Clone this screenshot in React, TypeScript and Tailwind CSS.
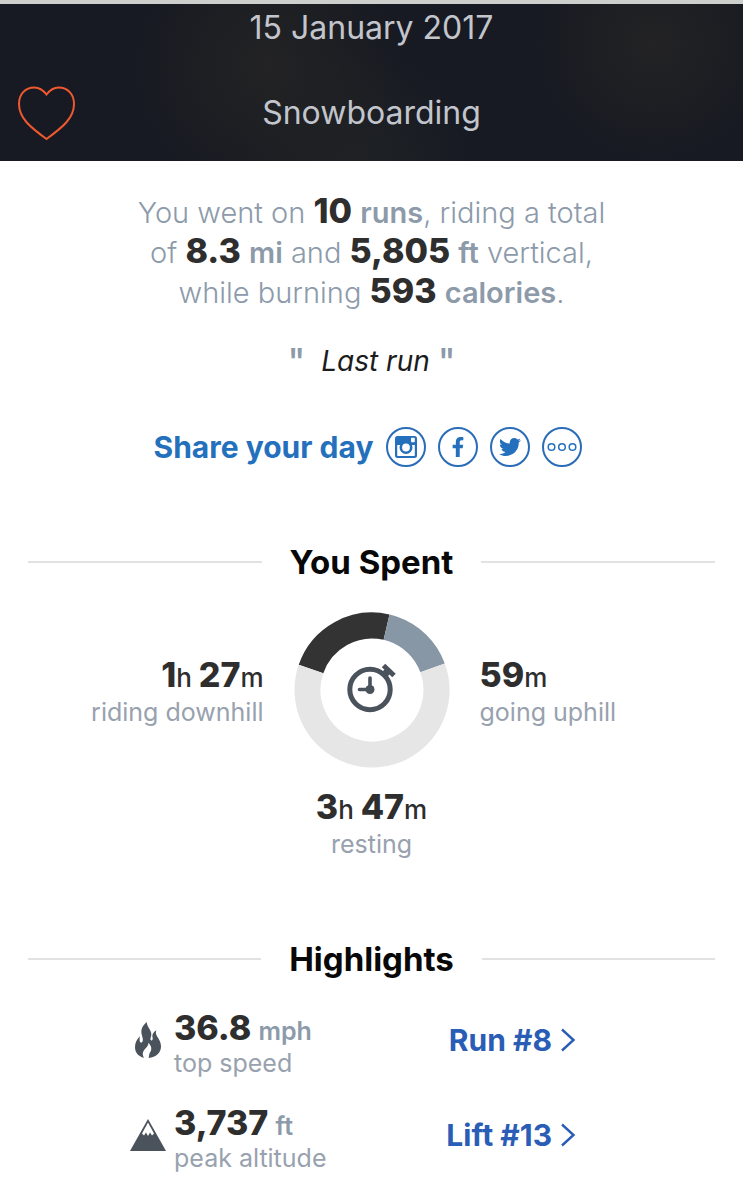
import type { ReactNode } from "react";
import { FaFacebookF, FaTwitter } from "react-icons/fa";

const spent = [
  { minutes: 87, color: "#333333" },
  { minutes: 59, color: "#8797a5" },
  { minutes: 227, color: "#e6e6e6" },
];
const totalMinutes = 373;

const Amount = ({ children }: { children: ReactNode }) => (
  <strong className="text-[34px] leading-0 font-extrabold text-[#2e2e2e]">
    {children}
  </strong>
);

const Unit = ({ children }: { children: ReactNode }) => (
  <span className="font-semibold">{children}</span>
);

const SectionTitle = ({ children }: { children: ReactNode }) => (
  <div className="flex items-center gap-7 px-7">
    <div className="h-0.5 flex-1 bg-[#e2e2e2]" />
    <h2 className="text-[33px] leading-10 font-bold text-[#080808]">
      {children}
    </h2>
    <div className="h-0.5 flex-1 bg-[#e2e2e2]" />
  </div>
);

const Duration = ({
  hours,
  minutes,
  label,
}: {
  hours?: number;
  minutes: number;
  label: string;
}) => (
  <div>
    <p className="text-[26px] leading-9 font-medium text-[#2e2e2e]">
      {hours && (
        <>
          <Amount>{hours}</Amount>h{" "}
        </>
      )}
      <Amount>{minutes}</Amount>m
    </p>
    <p className="text-[25px] leading-8 text-[#98a1ae]">{label}</p>
  </div>
);

const ShareButton = ({
  label,
  children,
}: {
  label: string;
  children: ReactNode;
}) => (
  <button
    type="button"
    aria-label={label}
    className="flex size-10 items-center justify-center rounded-full border-2 border-[#2a6cb8] text-[#2470bd]"
  >
    {children}
  </button>
);

const InstagramIcon = () => (
  <svg viewBox="0 0 22 22" className="size-[22px]">
    <path
      fill="currentColor"
      fillRule="evenodd"
      d="M2.500 0h17A2.500 2.500 0 0 1 22 2.500v17a2.500 2.500 0 0 1-2.500 2.500h-17A2.500 2.500 0 0 1 0 19.500v-17A2.500 2.500 0 0 1 2.500 0zM16 2.500v3a.7.7 0 0 0 .7.7h2.400a.7.7 0 0 0 .7-.7V2.500a.7.7 0 0 0-.7-.7h-2.400a.7.7 0 0 0-.7.7zM2.200 9v10.200a.7.7 0 0 0 .7.700h16.200a.7.7 0 0 0 .7-.7V9z"
    />
    <circle cx="11" cy="11.500" r="5.200" fill="white" stroke="currentColor" strokeWidth="2.600" />
  </svg>
);

const MoreIcon = () => (
  <svg viewBox="0 0 30 10" className="h-[10px] w-[30px] shrink-0">
    <g fill="none" stroke="currentColor" strokeWidth="1.500">
      <circle cx="4.500" cy="5" r="3.300" />
      <circle cx="15" cy="5" r="3.300" />
      <circle cx="25.500" cy="5" r="3.300" />
    </g>
  </svg>
);

const HeartIcon = () => (
  <svg viewBox="0 0 60 56" className="h-14 w-[60px]">
    <path
      fill="none"
      stroke="#f0592f"
      strokeWidth="2"
      d="M30.500 9.500C27 5 23 2.500 18.500 2.500C9 2.500 3 9.500 3 19C3 33 14 42 30.500 54C47 42 58 33 58 19C58 9.500 52 2.500 42.500 2.500C38 2.500 34 5 30.500 9.500Z"
    />
  </svg>
);

const FlameIcon = () => (
  <svg viewBox="0 0 78 108" className="h-9 w-[26px]">
    <path
      fill="#4a525c"
      d="M35 0C22 12 17 22 20 37C22 46 26 54 22 60C18 64 13 60 14 53C14 49 14 47 15 43C6 51 0 62 0 75C0 92 10 104 27 107C21 97 23 89 30 81C36 74 41 70 40 62C50 71 52 83 44 93C42 98 42 103 41 108C63 106 78 93 78 73C78 60 71 51 66 43C62 36 62 31 64 25C55 31 50 38 53 48C54 53 51 57 48 55C44 52 49 45 49 37C49 23 36 16 35 0Z"
    />
  </svg>
);

const MountainIcon = () => (
  <svg viewBox="0 0 36 32" className="h-8 w-9">
    <path fill="#4a525c" d="M18 0L36 32H0Z" />
    <path
      fill="white"
      d="M18 3.500L24 14.500L22 16.500L20 13.500L18 17L16 13.500L14 16.500L12 14.500Z"
    />
  </svg>
);

// Three-part ring with a stopwatch in the middle
const TimeRing = () => {
  let start = 0;
  return (
    <svg viewBox="0 0 156 156" className="size-39">
      <g fill="none" strokeWidth="26" transform="rotate(-161 78 78)">
        {spent.map((part) => {
          const offset = -start;
          start += part.minutes;
          return (
            <circle
              key={part.color}
              cx="78"
              cy="78"
              r="64.5"
              stroke={part.color}
              pathLength={totalMinutes}
              strokeDasharray={`${part.minutes} ${totalMinutes - part.minutes}`}
              strokeDashoffset={offset}
            />
          );
        })}
      </g>
      <g fill="none" stroke="#4a525c">
        <circle cx="76" cy="77.500" r="20.200" strokeWidth="5" />
        <path d="M76 66V77.500H65.500" strokeWidth="3.600" strokeLinecap="round" />
        <path d="M89 64L94.500 58.500" strokeWidth="7" />
        <path d="M89.500 53.500L100 63.500" strokeWidth="5" />
      </g>
      <circle cx="76" cy="77.500" r="4.500" fill="#4a525c" />
    </svg>
  );
};

const Highlight = ({
  icon,
  value,
  unit,
  label,
  link,
}: {
  icon: ReactNode;
  value: string;
  unit: string;
  label: string;
  link: string;
}) => (
  <div className="flex items-start justify-between">
    <div className="flex items-start gap-2">
      <div className="flex h-[50px] w-9 items-center justify-center">{icon}</div>
      <div>
        <p className="text-[25px] leading-8 text-[#8c9aaa]">
          <Amount>{value}</Amount> <Unit>{unit}</Unit>
        </p>
        <p className="text-[25px] leading-8 text-[#98a1ae]">{label}</p>
      </div>
    </div>
    <a
      href="#"
      className="flex items-center gap-2 text-[30px] leading-[50px] font-bold text-[#2a5db5]"
    >
      {link}
      <svg viewBox="0 0 16 24" className="h-6 w-4">
        <path d="M2 1.500L13.500 12L2 22.500" fill="none" stroke="currentColor" strokeWidth="2.400" />
      </svg>
    </a>
  </div>
);

const App = () => {
  return (
    <main className="bg-white font-['Inter',sans-serif]">
      <header className="border-t-4 border-[#cdcfcd] bg-[#171a22] bg-[radial-gradient(circle_at_36%_40%,#232324,transparent_28%),radial-gradient(circle_at_88%_25%,#232324,transparent_18%),radial-gradient(circle_at_48%_100%,#1f2225,transparent_28%)] pb-5 text-center text-[32px] text-[#c3c5cc]">
        <h1 className="leading-12">15 January 2017</h1>
        <div className="mt-[33px] grid grid-cols-[60px_1fr_60px] items-center px-4">
          <button type="button" aria-label="Like">
            <HeartIcon />
          </button>
          <p>Snowboarding</p>
        </div>
      </header>

      <section className="pt-8 text-center">
        <p className="text-[29px] leading-10 font-light text-[#8c9aaa]">
          You went on <Amount>10</Amount> <Unit>runs</Unit>, riding a total
          <br />
          of <Amount>8.3</Amount> <Unit>mi</Unit> and <Amount>5,805</Amount>{" "}
          <Unit>ft</Unit> vertical,
          <br />
          while burning <Amount>593</Amount> <Unit>calories</Unit>.
        </p>
        <p className="mt-7 flex items-center justify-center gap-2 text-[36px] leading-10 font-medium text-[#8c9aaa]">
          <span>"</span>
          <em className="pl-2 text-[28px] font-normal text-[#1c1c1c]">
            Last run
          </em>
          <span>"</span>
        </p>
      </section>

      <section className="mt-[46px] flex items-center justify-center gap-3 pr-2">
        <h2 className="text-[30px] leading-10 font-bold text-[#2470bd]">
          Share your day
        </h2>
        <ShareButton label="Share on Instagram">
          <InstagramIcon />
        </ShareButton>
        <ShareButton label="Share on Facebook">
          <FaFacebookF className="size-5" />
        </ShareButton>
        <ShareButton label="Share on Twitter">
          <FaTwitter className="size-[22px]" />
        </ShareButton>
        <ShareButton label="More">
          <MoreIcon />
        </ShareButton>
      </section>

      <section className="mt-[75px]">
        <SectionTitle>You Spent</SectionTitle>
        <div className="mt-[30px] grid grid-cols-[1fr_auto_1fr] items-center gap-x-[30px]">
          <div className="pt-2 text-right">
            <Duration hours={1} minutes={27} label="riding downhill" />
          </div>
          <TimeRing />
          <div className="pt-2">
            <Duration minutes={59} label="going uphill" />
          </div>
        </div>
        <div className="mt-6 text-center">
          <Duration hours={3} minutes={47} label="resting" />
        </div>
      </section>

      <section className="mt-[79px] pb-5">
        <SectionTitle>Highlights</SectionTitle>
        <div className="mt-9 flex flex-col gap-[31px] pr-[167px] pl-[130px]">
          <Highlight
            icon={<FlameIcon />}
            value="36.8"
            unit="mph"
            label="top speed"
            link="Run #8"
          />
          <Highlight
            icon={<MountainIcon />}
            value="3,737"
            unit="ft"
            label="peak altitude"
            link="Lift #13"
          />
        </div>
      </section>
    </main>
  );
};
export default App;
